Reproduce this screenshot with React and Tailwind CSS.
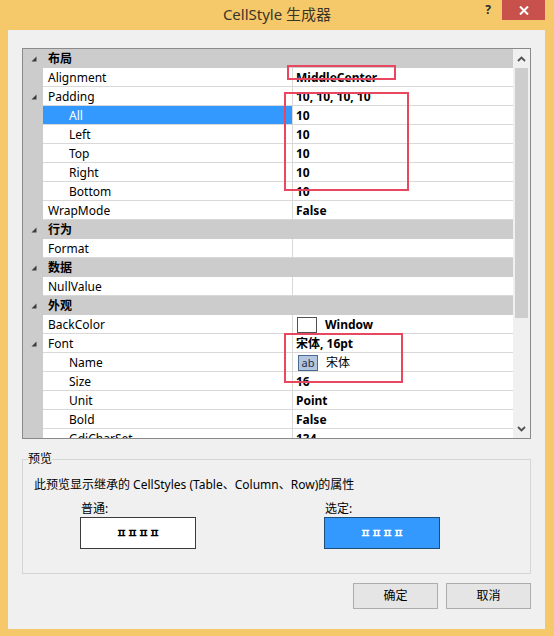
import React from "react";

const FONT = "font-['Noto_Sans','Noto_Sans_CJK_SC',sans-serif]";

function Glyph() {
  return (
    <svg width="6" height="6" viewBox="0 0 6 6">
      <polygon points="5.5,0.5 5.5,5.5 0.5,5.5" fill="#3c3c3c" />
    </svg>
  );
}

const rows = [
  { cat: "布局" },
  { name: "Alignment", value: "MiddleCenter" },
  { name: "Padding", value: "10, 10, 10, 10", expand: true },
  { name: "All", value: "10", level: 2, selected: true },
  { name: "Left", value: "10", level: 2 },
  { name: "Top", value: "10", level: 2 },
  { name: "Right", value: "10", level: 2 },
  { name: "Bottom", value: "10", level: 2 },
  { name: "WrapMode", value: "False" },
  { cat: "行为" },
  { name: "Format", value: "" },
  { cat: "数据" },
  { name: "NullValue", value: "" },
  { cat: "外观" },
  { name: "BackColor", kind: "color" },
  { name: "Font", value: "宋体, 16pt", expand: true },
  { name: "Name", level: 2, kind: "font" },
  { name: "Size", value: "16", level: 2 },
  { name: "Unit", value: "Point", level: 2 },
  { name: "Bold", value: "False", level: 2 },
  { name: "GdiCharSet", value: "134", level: 2 },
];

function Row({ r }) {
  if (r.cat) {
    return (
      <div className="flex h-[19px] shrink-0 items-center bg-[#cccccc]">
        <div className="flex w-[20px] shrink-0 items-center justify-center pl-[1px]">
          <Glyph />
        </div>
        <div className="pl-[5px] pt-[1px] text-[12px] font-bold leading-[18px] text-black">{r.cat}</div>
      </div>
    );
  }
  let value = null;
  if (r.kind === "color") {
    value = (
      <div className="flex items-center">
        <div className="ml-[1px] h-[16px] w-[20px] border border-[#505050] bg-white" />
        <span className="ml-[8px] font-bold">Window</span>
      </div>
    );
  } else if (r.kind === "font") {
    value = (
      <div className="flex items-center">
        <div className="ml-[2px] flex h-[16px] w-[20px] items-center justify-center border border-[#4a6a94] bg-[#b3c6df] text-[11px] leading-[14px] text-[#1e2e48]">
          ab
        </div>
        <span className="ml-[8px]">宋体</span>
      </div>
    );
  } else {
    value = <span className="font-bold">{r.value}</span>;
  }
  return (
    <div className="flex h-[19px] shrink-0">
      <div className="flex w-[20px] shrink-0 items-center justify-center bg-[#cccccc] pl-[1px]">
        {r.expand ? <Glyph /> : null}
      </div>
      <div
        className={
          "w-[250px] shrink-0 border-b border-r border-[#d8d8d8] pt-[1px] text-[12px] leading-[17px] " +
          (r.level === 2 ? "pl-[26px] " : "pl-[5px] ") +
          (r.selected ? "bg-[#3399ff] text-white" : "bg-white text-black")
        }
      >
        {r.name}
      </div>
      <div className="flex-1 border-b border-[#d8d8d8] bg-white pl-[3px] pt-[1px] text-[12px] leading-[17px] text-black">
        {value}
      </div>
    </div>
  );
}

function Chevron({ up }) {
  return (
    <svg width="9" height="6" viewBox="0 0 9 6">
      <polyline
        points={up ? "1,5 4.5,1.5 8,5" : "1,1 4.5,4.5 8,1"}
        fill="none"
        stroke="#505050"
        strokeWidth="1.8"
      />
    </svg>
  );
}

export default function App() {
  return (
    <div className={"relative flex h-[636px] w-[554px] flex-col bg-[#f5c96a] " + FONT}>
      {/* title bar */}
      <div className="grid h-[30px] shrink-0 grid-cols-[120px_1fr_120px]">
        <div />
        <div className="flex items-center justify-center pb-[1px] text-[15px] text-[#3a3528]">CellStyle 生成器</div>
        <div className="flex items-start justify-end pr-[9px]">
          <div className="mr-[11px] mt-[3px] text-[12px] font-bold leading-[14px] text-[#2c2c2c]">?</div>
          <div className="flex h-[20px] w-[43px] items-center justify-center bg-[#c9514c]">
            <svg width="10" height="9" viewBox="0 0 10 9">
              <path d="M1 0.5 L9 8.5 M9 0.5 L1 8.5" stroke="white" strokeWidth="2" />
            </svg>
          </div>
        </div>
      </div>

      {/* client */}
      <div className="ml-[8px] mr-[9px] flex h-[599px] shrink-0 flex-col bg-[#f0f0f0] px-[14px] pt-[18px]">
        {/* property grid */}
        <div className="flex h-[391px] shrink-0 border border-[#8a8a8a] bg-white">
          <div className="flex flex-1 flex-col overflow-hidden">
            {rows.map((r, i) => (
              <Row key={i} r={r} />
            ))}
          </div>
          <div className="flex w-[17px] shrink-0 flex-col bg-[#f0f0f0]">
            <div className="flex h-[19px] shrink-0 items-center justify-center">
              <Chevron up />
            </div>
            <div className="mx-[2px] h-[250px] shrink-0 bg-[#cdcdcd]" />
            <div className="flex-1" />
            <div className="flex h-[19px] shrink-0 items-center justify-center">
              <Chevron />
            </div>
          </div>
        </div>

        {/* preview group */}
        <fieldset className="mt-[13px] h-[122px] shrink-0 border border-[#d5d5d5] p-0">
          <legend className="ml-[5px] px-0 text-[12px] leading-[14px] text-black">预览</legend>
          <div className="pl-[11px] pt-[11px]">
            <div className="text-[12px] leading-[16px] text-black">此预览显示继承的 CellStyles (Table、Column、Row)的属性</div>
            <div className="ml-[46px] mt-[9px] flex gap-[128px]">
              <div className="flex flex-col">
                <div className="pl-[1px] text-[12px] leading-[14px] text-black">普通:</div>
                <div className="mt-[1px] flex h-[32px] w-[116px] items-center justify-center border border-[#3a3a3a] bg-white">
                  <span className="font-['Noto_Sans_CJK_KR',sans-serif] text-[12px] font-bold leading-[12px] text-black">ㅍㅍㅍㅍ</span>
                </div>
              </div>
              <div className="flex flex-col">
                <div className="pl-[1px] text-[12px] leading-[14px] text-black">选定:</div>
                <div className="mt-[1px] flex h-[32px] w-[116px] items-center justify-center border border-[#1d4e7a] bg-[#3399ff]">
                  <span className="font-['Noto_Sans_CJK_KR',sans-serif] text-[12px] font-bold leading-[12px] text-white">ㅍㅍㅍㅍ</span>
                </div>
              </div>
            </div>
          </div>
        </fieldset>

        {/* buttons */}
        <div className="mt-[9px] flex justify-end gap-[8px]">
          <div className="flex h-[26px] w-[85px] items-center justify-center border border-[#adadad] bg-[#e5e5e5] text-[12px] text-black">确定</div>
          <div className="flex h-[26px] w-[85px] items-center justify-center border border-[#adadad] bg-[#e5e5e5] text-[12px] text-black">取消</div>
        </div>
      </div>

      {/* annotation rectangles */}
      <div className="pointer-events-none absolute left-[287px] top-[65px] h-[15px] w-[109px] border-2 border-[#e8475f]" />
      <div className="pointer-events-none absolute left-[284px] top-[92px] h-[99px] w-[125px] border-2 border-[#e8475f]" />
      <div className="pointer-events-none absolute left-[284px] top-[333px] h-[50px] w-[119px] border-2 border-[#e8475f]" />
    </div>
  );
}
